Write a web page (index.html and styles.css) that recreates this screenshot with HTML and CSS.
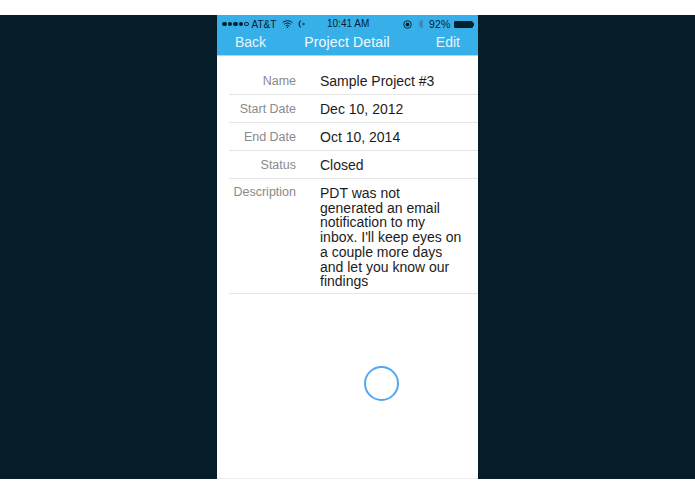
FILE: index.html
```html
<!DOCTYPE html>
<html lang="en">
<head>
<meta charset="utf-8">
<title>Project Detail</title>
<link rel="stylesheet" href="styles.css">
</head>
<body>
<main class="stage">
  <section class="phone">
    <header class="bar">
      <div class="status">
        <div class="status-left">
          <span class="signal"><i></i><i></i><i></i><i></i><i class="empty"></i></span>
          <span>AT&amp;T</span>
          <svg class="wifi" width="11" height="8" viewBox="0 0 11 8"><path d="M.6 2.7a7 7 0 0 1 9.8 0M2.2 4.4a4.7 4.7 0 0 1 6.6 0M3.800 6a2.400 2.400 0 0 1 3.400 0" fill="none" stroke="#07202e" stroke-width="1"/><circle cx="5.5" cy="7.2" r=".8" fill="#07202e"/></svg>
          <svg class="call" width="8" height="8" viewBox="0 0 8 8"><path d="M2.6.6C.8 2.6.8 5.4 2.6 7.4" fill="none" stroke="#07202e" stroke-width="1.1"/><path d="M4 4h2.200M5.300 3l1.200 1-1.200 1" fill="none" stroke="#07202e" stroke-width=".8"/></svg>
        </div>
        <div class="status-time">10:41 AM</div>
        <div class="status-right">
          <svg width="9" height="9" viewBox="0 0 9 9"><circle cx="4.5" cy="4.5" r="3.8" fill="none" stroke="#07202e" stroke-width=".9"/><circle cx="4.5" cy="4.5" r="2" fill="#07202e"/></svg>
          <svg class="bt" width="6" height="10" viewBox="0 0 6 10"><path d="M.6 2.800 5 6.800 3 9V1l2 2.200L.6 7.200" fill="none" stroke="#3f6f8c" stroke-width=".8"/></svg>
          <span class="pct">92%</span>
          <span class="battery"><span class="cell"></span><span class="cap"></span></span>
        </div>
      </div>
      <nav class="nav">
        <span>Back</span>
        <strong>Project Detail</strong>
        <span>Edit</span>
      </nav>
    </header>
    <dl class="details">
      <div class="row"><dt>Name</dt><dd>Sample Project #3</dd></div>
      <div class="row"><dt>Start Date</dt><dd>Dec 10, 2012</dd></div>
      <div class="row"><dt>End Date</dt><dd>Oct 10, 2014</dd></div>
      <div class="row"><dt>Status</dt><dd>Closed</dd></div>
      <div class="row row-long"><dt>Description</dt><dd>PDT was not generated an email notification to my inbox. I'll keep eyes on a couple more days and let you know our findings</dd></div>
    </dl>
    <div class="loading"><span class="ring"></span></div>
  </section>
</main>
</body>
</html>
```
FILE: styles.css
```css
* { box-sizing: border-box; }
html, body { margin: 0; padding: 0; background: #fff; }
body { height: 494px; overflow: hidden; font-family: "Liberation Sans", Arial, sans-serif; }
.stage { margin-top: 15px; height: 464px; background: #051c29; display: flex; justify-content: center; }
.phone { width: 261px; height: 464px; background: #fff; display: flex; flex-direction: column; }
.bar { height: 41px; background: #37b0ea; color: #fff; border-bottom: 1px solid #a9d9f0; flex: none; }
.status { height: 16px; padding: 2px 4px 0 5px; display: flex; justify-content: space-between; align-items: center; font-size: 10px; color: #07202e; position: relative; }
.status-left, .status-right { display: flex; align-items: center; gap: 3px; }
.signal { display: flex; gap: 1px; }
.signal i { width: 4.500px; height: 4.500px; border-radius: 50%; background: #07202e; }
.signal i.empty { background: none; border: .7px solid #07202e; }
.wifi { margin-left: 3px; }
.call { margin-left: 2px; }
.status-time { position: absolute; left: 110px; top: 2px; line-height: 14px; }
.status-right { gap: 5px; }
.bt { margin-left: 1px; }
.pct { font-size: 10.5px; letter-spacing: .2px; margin-right: -2px; }
.battery { display: flex; align-items: center; }
.cell { width: 19px; height: 7px; border-radius: 1.5px; background: #07202e; }
.cap { width: 1.500px; height: 3px; background: #07202e; }
.nav { height: 22px; padding: 0 18px; display: flex; justify-content: space-between; align-items: center; font-size: 14px; color: #e4f4fc; }
.nav strong { font-weight: 400; color: #f4fbff; font-size: 14px; letter-spacing: .15px; margin-left: -8px; }
.details { margin: 0; flex: none; }
.row { display: grid; grid-template-columns: 67px 1fr; column-gap: 24px; height: 28px; margin-left: 12px; border-bottom: 1px solid #e6e6e6; align-items: center; }
.details .row:first-child { height: 39px; padding-top: 11px; }
.row dt { font-size: 12.500px; color: #8a8a8a; text-align: right; white-space: nowrap; }
.row dd { margin: 0; font-size: 14px; color: #1c1c1c; padding-top: 1px; }
.row.row-long { height: 115px; align-items: start; padding-top: 6px; }
.row-long dt { line-height: 14px; }
.row-long dd { line-height: 14.700px; padding: 1px 12px 0 0; }
.loading { flex: 1; display: flex; justify-content: center; padding-left: 68px; border-bottom: 1px solid #eee; }
.ring { width: 35px; height: 35px; margin-top: 72px; border: 2px solid #56a6ee; border-radius: 50%; }
```
